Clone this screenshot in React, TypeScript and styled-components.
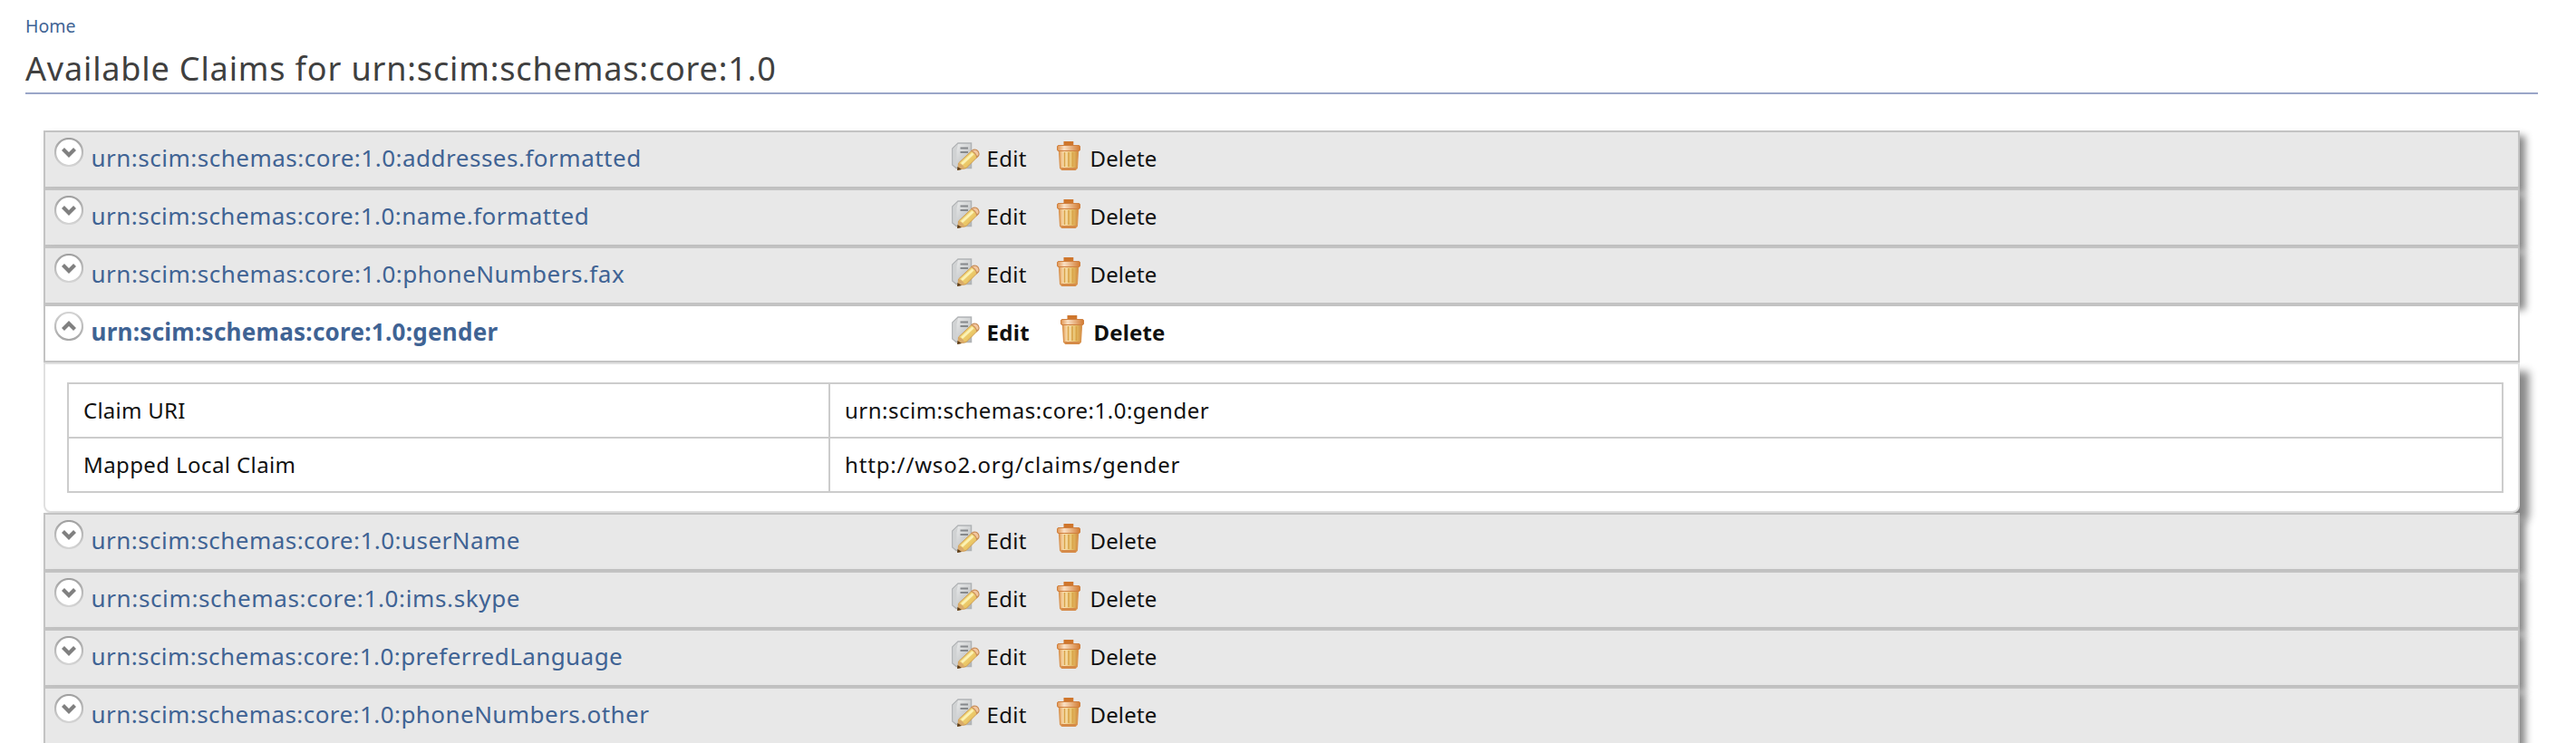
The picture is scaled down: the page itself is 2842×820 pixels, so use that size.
import React from 'react';
import styled, { createGlobalStyle, css } from 'styled-components';

const GlobalStyle = createGlobalStyle`
  * { box-sizing: border-box; }
  html, body { margin: 0; background: #fff; }
  body {
    height: 820px;
    overflow: hidden;
    font-family: 'Noto Sans', 'Open Sans', sans-serif;
    color: #111;
  }
`;

const Page = styled.main`
  display: flex;
  flex-direction: column;
  width: 2842px;
  height: 820px;
  padding: 10px 42px 0 28px;
  overflow: hidden;
  background: #fff;
`;

const Breadcrumb = styled.a`
  flex: none;
  height: 38px;
  font-size: 19.5px;
  line-height: 37px;
  color: #3f6394;
`;

const Title = styled.h1`
  flex: none;
  height: 56px;
  margin: 0 0 40px;
  border-bottom: 2px solid #9aa6c8;
  font-size: 36px;
  font-weight: 400;
  line-height: 56px;
  letter-spacing: 0.85px;
  white-space: nowrap;
  color: #404040;
`;

const Accordion = styled.div`
  flex: none;
  margin: 0 20px;
`;

const Row = styled.div<{ $open?: boolean }>`
  position: relative;
  display: flex;
  height: 64px;
  padding: 6px 0 0 10px;
  border: 2px solid #c3c3c3;
  background: ${(p) => (p.$open ? '#fff' : '#e8e8e8')};
  font-weight: ${(p) => (p.$open ? 700 : 400)};
  ${(p) => !p.$open && css`box-shadow: 6px 6px 8px #888;`}
`;

const ClaimName = styled.a<{ $spacing: number }>`
  width: 957px;
  padding-left: 8.5px;
  font-size: 26px;
  line-height: 44px;
  letter-spacing: ${(p) => p.$spacing}px;
  white-space: nowrap;
  color: #3f6394;
`;

const Action = styled.a<{ $width: number; $spacing: number }>`
  display: flex;
  flex: none;
  gap: 7.5px;
  width: ${(p) => p.$width}px;
  padding-top: 4px;
  font-size: 24px;
  line-height: 38px;
  letter-spacing: ${(p) => p.$spacing}px;
  white-space: nowrap;
`;

const Icon = styled.svg`
  display: block;
  flex: none;
  width: 32px;
  height: 32px;
`;

const Panel = styled.section`
  position: relative;
  height: 166px;
  padding: 20px 16px 20px 24px;
  border: 2px solid #e0e0e0;
  border-radius: 0 0 8px 8px;
  background: #fff;
  box-shadow: 10px 10px 10px #888;
`;

const Table = styled.dl`
  display: grid;
  grid-template-columns: 838px 1fr;
  gap: 2px;
  margin: 0;
  padding: 2px;
  background: #ccc;
`;

const Cell = styled.div<{ $spacing: number }>`
  height: 58px;
  padding-left: 16px;
  background: #fff;
  font-size: 24px;
  line-height: 57px;
  letter-spacing: ${(p) => p.$spacing}px;
  white-space: nowrap;
`;

const Toggle = ({ open }: { open?: boolean }) => (
  <Icon viewBox="0 0 32 32">
    <circle cx="16" cy="16" r="15" fill="#fff" stroke={open ? 'url(#ringOpen)' : 'url(#ring)'} strokeWidth="2.2" />
    <path
      d={open ? 'M9.500 19.500l6.500-6.500 6.500 6.500' : 'M9.500 12.500l6.500 6.500 6.500-6.500'}
      fill="none"
      stroke="#808080"
      strokeWidth="4.2"
    />
  </Icon>
);

const EditIcon = () => (
  <Icon viewBox="0 0 32 32">
    <path d="M8 2h14.500v27.500H6L1.800 26V8z" fill="url(#paper)" stroke="#b0b3b5" strokeWidth="1.5" />
    <path d="M8 3L2.500 8.500V25.500L6.500 28.500V10z" fill="#d0d2d3" />
    <path d="M10.500 7.500h8.500M10.500 12h8.500" stroke="#85888b" strokeWidth="2" />
    <path d="M8.500 24L23 10.500q5 0 7.500 5.500L17 29.500l-9 1.500z" fill="url(#wood)" stroke="#cf9d50" strokeWidth="1" />
    <path d="M12 25L24.500 13.500" stroke="#fbf2b4" strokeWidth="3" />
    <path d="M23 10.500q2.500-2 5.500-1 3.500 2.500 2.200 6l-2 2q-1-4.500-5.700-7z" fill="#f3c79e" stroke="#c88d58" strokeWidth="1.2" />
    <path d="M8.500 24q5 1 7 6.500l-8 1z" fill="#d9aa6b" />
    <path d="M7.500 28l4.500 3-5 1z" fill="#5a3b18" />
  </Icon>
);

const TrashIcon = () => (
  <Icon viewBox="0 0 32 32">
    <path d="M10.500 0h10.800v5h-10.800z" fill="#cf762c" />
    <path d="M5.500 10h21l-1.200 19.500-2 2h-14.600l-2-2z" fill="url(#can)" stroke="#d99450" strokeWidth="1.400" />
    <path d="M11.500 12v16M16 12v16M20.500 12v16" stroke="#d9a348" strokeWidth="1.600" />
    <path d="M7.500 29h17l-1.500 3H9z" fill="#d58a48" />
    <rect x="3.500" y="4.500" width="25" height="6" rx="1.500" fill="url(#lid)" stroke="#d0803f" />
  </Icon>
);

const GradientDefs = styled.svg`
  position: absolute;
  width: 0;
  height: 0;
`;

const Gradients = () => (
  <GradientDefs>
    <defs>
      <linearGradient id="ring" x2="0" y2="1">
        <stop stopColor="#a0a0a0" />
        <stop offset="1" stopColor="#d4d4d4" />
      </linearGradient>
      <linearGradient id="ringOpen" x2="0" y2="1">
        <stop stopColor="#d4d4d4" />
        <stop offset="1" stopColor="#a8a8a8" />
      </linearGradient>
      <linearGradient id="paper" x2="1" y2="1">
        <stop stopColor="#f1f2f2" />
        <stop offset="1" stopColor="#b3b6b8" />
      </linearGradient>
      <linearGradient id="wood" x2="1" y2="1">
        <stop stopColor="#f6e48c" />
        <stop offset="1" stopColor="#e2b24c" />
      </linearGradient>
      <linearGradient id="can">
        <stop stopColor="#e4a05c" />
        <stop offset=".25" stopColor="#fae2b5" />
        <stop offset=".7" stopColor="#e5bf68" />
        <stop offset="1" stopColor="#d08c3c" />
      </linearGradient>
      <linearGradient id="lid">
        <stop stopColor="#e0934f" />
        <stop offset=".3" stopColor="#fae0c4" />
        <stop offset="1" stopColor="#d27b32" />
      </linearGradient>
    </defs>
  </GradientDefs>
);

type Claim = { name: string; spacing: number; mapped?: string };

const claims: Claim[] = [
  { name: 'addresses.formatted', spacing: 0.5 },
  { name: 'name.formatted', spacing: 0.47 },
  { name: 'phoneNumbers.fax', spacing: 0.51 },
  { name: 'gender', spacing: 0.27, mapped: 'http://wso2.org/claims/gender' },
  { name: 'userName', spacing: 0.46 },
  { name: 'ims.skype', spacing: 0.64 },
  { name: 'preferredLanguage', spacing: 0.43 },
  { name: 'phoneNumbers.other', spacing: 0.44 },
];

const DIALECT = 'urn:scim:schemas:core:1.0';

const ClaimRow = ({ name, spacing, mapped }: Claim) => {
  const open = Boolean(mapped);
  return (
    <>
      <Row $open={open}>
        <Toggle open={open} />
        <ClaimName $spacing={spacing}>{`${DIALECT}:${name}`}</ClaimName>
        <Action $width={open ? 118 : 114} $spacing={0.3}>
          <EditIcon />
          Edit
        </Action>
        <Action $width={140} $spacing={0.15}>
          <TrashIcon />
          Delete
        </Action>
      </Row>
      {open && (
        <Panel>
          <Table>
            <Cell $spacing={0.25}>Claim URI</Cell>
            <Cell $spacing={0.49}>{`${DIALECT}:${name}`}</Cell>
            <Cell $spacing={0.4}>Mapped Local Claim</Cell>
            <Cell $spacing={0.85}>{mapped}</Cell>
          </Table>
        </Panel>
      )}
    </>
  );
};

export default function App() {
  return (
    <>
      <GlobalStyle />
      <Page>
        <Gradients />
        <Breadcrumb>Home</Breadcrumb>
        <Title>Available Claims for {DIALECT}</Title>
        <Accordion>
          {claims.map((claim) => (
            <ClaimRow key={claim.name} {...claim} />
          ))}
        </Accordion>
      </Page>
    </>
  );
}
